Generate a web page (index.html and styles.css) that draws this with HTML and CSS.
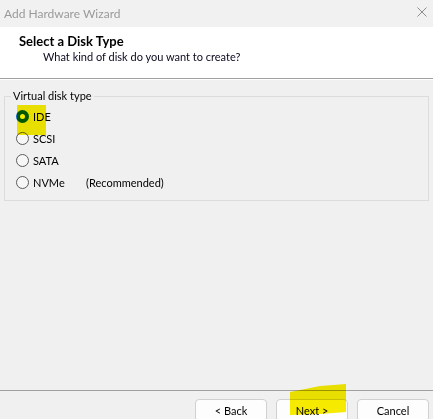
FILE: index.html
```html
<!DOCTYPE html>
<html lang="en">
<head>
<meta charset="utf-8">
<title>Add Hardware Wizard</title>
<link rel="stylesheet" href="styles.css">
</head>
<body>
<div class="window">
  <div class="titlebar">
    <span class="title">Add Hardware Wizard</span>
    <svg class="close" width="10" height="10" viewBox="0 0 10 10"><path d="M0.5 0.5 L9.5 9.5 M9.5 0.5 L0.5 9.5" stroke="#8c8c8c" stroke-width="1" fill="none"/></svg>
  </div>
  <div class="header">
    <div class="h-title">Select a Disk Type</div>
    <div class="h-sub">What kind of disk do you want to create?</div>
  </div>
  <div class="main">
    <fieldset class="group">
      <legend class="legend">Virtual disk type</legend>
      <div class="opts">
        <div class="opt"><span class="radio checked"></span><span class="lbl">IDE</span></div>
        <div class="opt"><span class="radio"></span><span class="lbl">SCSI</span></div>
        <div class="opt"><span class="radio"></span><span class="lbl">SATA</span></div>
        <div class="opt"><span class="radio"></span><span class="lbl nvme">NVMe</span><span class="lbl">(Recommended)</span></div>
      </div>
      <div class="hl hl-ide"></div>
    </fieldset>
  </div>
  <div class="footer">
    <button class="btn">&lt; Back</button>
    <button class="btn">Next &gt;</button>
    <button class="btn">Cancel</button>
    <svg class="hl-next" width="57" height="33" viewBox="0 0 57 33"><polygon points="0,9 10,7 30,3 56,1 56,29 30,31 0,32" fill="#f7ec00"/></svg>
  </div>
</div>
</body>
</html>
```
FILE: styles.css
```css
html, body {
  margin: 0;
  padding: 0;
}
body {
  background: #f0f0f0;
  font-family: Lato, "Noto Sans", sans-serif;
  font-size: 11px;
  color: #000;
}
.window {
  width: 433px;
  height: 419px;
  display: flex;
  flex-direction: column;
  overflow: hidden;
  position: relative;
}
.titlebar {
  height: 27px;
  display: flex;
  align-items: center;
  justify-content: space-between;
  padding: 0 6px 0 4px;
  background: #f1f1f1;
  flex: none;
}
.title {
  color: #9a9a9a;
  font-size: 12px;
}
.close {
  margin-top: -3px;
}
.header {
  background: #fff;
  height: 52px;
  padding-top: 6px;
  box-sizing: border-box;
  border-bottom: 1px solid #a0a0a0;
  box-shadow: 0 1px 0 #ffffff;
  flex: none;
  line-height: 16px;
}
.h-title {
  font-weight: bold;
  font-size: 13px;
  padding-left: 19px;
}
.h-sub {
  padding-left: 43px;
  color: #0a0a1e;
}
.main {
  flex: 1;
  padding-top: 9px;
}
.group {
  margin: 0 4px;
  padding: 1px 6px 7px 6px;
  border: 1px solid #dcdcdc;
  position: relative;
}
.legend {
  padding: 0 2px;
  line-height: 16px;
  color: #000;
}
.opts {
  padding-left: 5px;
}
.opt {
  height: 22px;
  display: flex;
  align-items: center;
  gap: 4px;
}
.radio {
  width: 13px;
  height: 13px;
  box-sizing: border-box;
  border-radius: 50%;
  border: 1px solid #5c5c5c;
  background: #f7f7f7;
  flex: none;
  position: relative;
}
.radio.checked {
  border: none;
  background: #005fb8;
}
.radio.checked::after {
  content: "";
  position: absolute;
  left: 4px;
  top: 4px;
  width: 5px;
  height: 5px;
  border-radius: 50%;
  background: #fff;
}
.nvme {
  width: 49px;
}
.hl {
  position: absolute;
  mix-blend-mode: multiply;
  background: #f7ec00;
}
.hl-ide {
  left: 12px;
  top: 1px;
  width: 29px;
  height: 30px;
}
.footer {
  flex: none;
  height: 29px;
  box-sizing: border-box;
  border-top: 1px solid #a0a0a0;
  padding: 8px 4px 0 0;
  display: flex;
  justify-content: flex-end;
  align-items: flex-start;
  gap: 9px;
  position: relative;
}
.btn {
  width: 72px;
  height: 23px;
  flex: none;
  box-sizing: border-box;
  border: 1px solid #d0d0d0;
  border-radius: 4px;
  background: #fdfdfd;
  font-family: inherit;
  font-size: 11px;
  color: #000;
  padding: 0;
}
.hl-next {
  position: absolute;
  left: 290px;
  top: -8px;
  mix-blend-mode: multiply;
}
```
